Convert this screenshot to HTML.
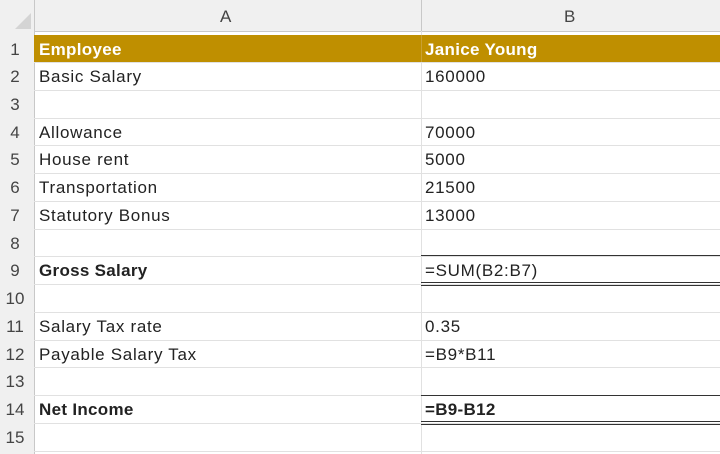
<!DOCTYPE html>
<html><head><style>
body{margin:0;width:720px;height:454px;overflow:hidden;background:#fff;font-family:"Liberation Sans",Arial,sans-serif;position:relative;}
.hdr{position:absolute;top:0;left:0;width:720px;height:31px;background:#f0f0f0;border-bottom:1px solid #c8c8c8;}
.rn{position:absolute;left:0;width:34px;background:#f0f0f0;border-right:1px solid #c8c8c8;top:31px;height:423px;}
.t{position:absolute;font-size:17px;letter-spacing:0.7px;color:#222;white-space:nowrap;}
.n{position:absolute;font-size:17px;color:#444;width:30px;text-align:center;left:0;}
.a{left:39px}.bb{left:425px}
.hl{position:absolute;left:34px;width:686px;height:1px;background:#e1e1e1;}
.vl{position:absolute;top:31px;width:1px;height:423px;background:#e1e1e1;}
.b{font-weight:bold;letter-spacing:0.3px}
.w{color:#fff}
.k{position:absolute;left:421px;width:299px;height:1px;background:#333}
</style></head><body>
<div class="hdr"></div>
<div style="position:absolute;left:0;top:0;width:34px;height:31px;border-right:1px solid #c8c8c8"></div>
<svg style="position:absolute;left:14px;top:12px" width="18" height="18"><polygon points="17,1 17,17 1,17" fill="#d4d4d4"/></svg>
<div class="t" style="left:220px;top:7px;color:#444">A</div>
<div class="t" style="left:564px;top:7px;color:#444">B</div>
<div style="position:absolute;left:421px;top:0;width:1px;height:31px;background:#c8c8c8"></div>
<div class="rn"></div>
<div class="vl" style="left:421px"></div>

<div class="hl" style="top:62px"></div>
<div class="hl" style="top:90px"></div>
<div class="hl" style="top:118px"></div>
<div class="hl" style="top:145px"></div>
<div class="hl" style="top:173px"></div>
<div class="hl" style="top:201px"></div>
<div class="hl" style="top:229px"></div>
<div class="hl" style="top:256px"></div>
<div class="hl" style="top:284px"></div>
<div class="hl" style="top:312px"></div>
<div class="hl" style="top:340px"></div>
<div class="hl" style="top:367px"></div>
<div class="hl" style="top:395px"></div>
<div class="hl" style="top:423px"></div>
<div class="hl" style="top:451px"></div>

<div style="position:absolute;left:34px;top:35px;width:686px;height:27px;background:#bf8f00"></div>
<div style="position:absolute;left:421px;top:35px;width:1px;height:27px;background:#c9a033"></div>

<div class="n" style="top:40px">1</div>
<div class="n" style="top:67px">2</div>
<div class="n" style="top:95px">3</div>
<div class="n" style="top:123px">4</div>
<div class="n" style="top:150px">5</div>
<div class="n" style="top:178px">6</div>
<div class="n" style="top:206px">7</div>
<div class="n" style="top:234px">8</div>
<div class="n" style="top:261px">9</div>
<div class="n" style="top:289px">10</div>
<div class="n" style="top:317px">11</div>
<div class="n" style="top:345px">12</div>
<div class="n" style="top:372px">13</div>
<div class="n" style="top:400px">14</div>
<div class="n" style="top:428px">15</div>

<div class="t a b w" style="top:40px">Employee</div>
<div class="t bb b w" style="top:40px">Janice Young</div>
<div class="t a" style="top:67px">Basic Salary</div>
<div class="t bb" style="top:67px">160000</div>
<div class="t a" style="top:123px">Allowance</div>
<div class="t bb" style="top:123px">70000</div>
<div class="t a" style="top:150px">House rent</div>
<div class="t bb" style="top:150px">5000</div>
<div class="t a" style="top:178px">Transportation</div>
<div class="t bb" style="top:178px">21500</div>
<div class="t a" style="top:206px">Statutory Bonus</div>
<div class="t bb" style="top:206px">13000</div>
<div class="t a b" style="top:261px">Gross Salary</div>
<div class="t bb" style="top:261px">=SUM(B2:B7)</div>
<div class="t a" style="top:317px">Salary Tax rate</div>
<div class="t bb" style="top:317px">0.35</div>
<div class="t a" style="top:345px">Payable Salary Tax</div>
<div class="t bb" style="top:345px">=B9*B11</div>
<div class="t a b" style="top:400px">Net Income</div>
<div class="t bb b" style="top:400px">=B9-B12</div>

<div class="k" style="top:255px"></div>
<div class="k" style="top:282px"></div>
<div class="k" style="top:285px"></div>
<div class="k" style="top:395px"></div>
<div class="k" style="top:421px"></div>
<div class="k" style="top:424px"></div>
</body></html>
